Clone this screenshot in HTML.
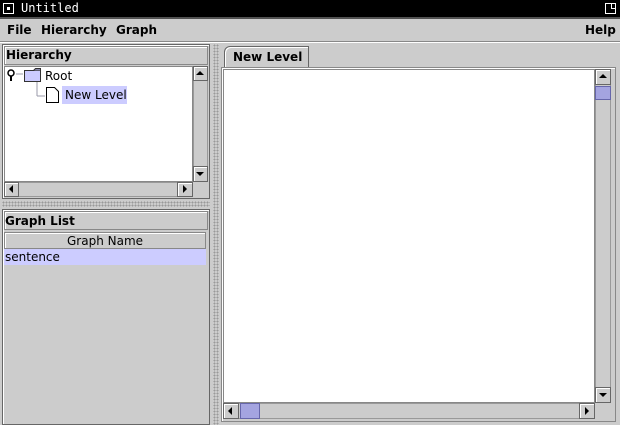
<!DOCTYPE html>
<html><head><meta charset="utf-8"><style>
*{margin:0;padding:0;box-sizing:border-box}
body{width:620px;height:425px;background:#cccccc;position:relative;overflow:hidden;font-family:"DejaVu Sans","Liberation Sans",sans-serif;font-size:12px;color:#000}
.a{position:absolute}
.t{margin-top:1px}
.b{font-weight:bold}
.dots{background-image:radial-gradient(#999 0.8px,transparent 1px);background-size:3px 3px}
.sb{background:#cccccc;border:1px solid #999}
.btn{position:absolute;background:#ccc;border:1px solid #666;box-shadow:inset 1px 1px #fff}
.thumb{position:absolute;background:#ccccff;border:1px solid #6666aa;background-image:radial-gradient(#8888cc 0.7px,transparent 1px);background-size:2px 2px}
</style></head><body>
<div class="a" style="left:0;top:0;width:620px;height:17px;background:#000"></div>
<div class="a" style="left:0;top:17px;width:620px;height:2px;background-image:radial-gradient(#000 0.7px,transparent 1px);background-size:2px 2px"></div>
<div class="a" style="left:3px;top:3px;width:11px;height:11px;border:1px solid #fff"><div class="a" style="left:3px;top:3px;width:3px;height:3px;background:#fff"></div></div>
<div class="a" style="left:21px;top:1px;color:#fff;font-family:'DejaVu Sans Mono',monospace;font-size:12px">Untitled</div>
<div class="a" style="left:605px;top:3px;width:11px;height:11px;border:1px solid #fff"><div class="a" style="left:5px;top:-1px;width:5px;height:6px;border:1px solid #fff;border-top:none;border-right:none"></div></div>
<div class="a b" style="left:7px;top:23px">File</div>
<div class="a b" style="left:41px;top:23px">Hierarchy</div>
<div class="a b" style="left:116px;top:23px">Graph</div>
<div class="a b" style="left:585px;top:23px">Help</div>
<div class="a" style="left:0;top:41px;width:620px;height:1px;background:#888"></div>
<div class="a" style="left:0;top:42px;width:620px;height:1px;background:#fff"></div>
<div class="a" style="left:2px;top:44px;width:208px;height:155px;border:1px solid #666;box-shadow:inset 1px 1px #fff"></div>
<div class="a" style="left:4px;top:46px;width:204px;height:19px;border:1px solid #888;box-shadow:inset 1px 1px #fff"></div>
<div class="a b" style="left:6px;top:48px">Hierarchy</div>
<div class="a" style="left:4px;top:66px;width:189px;height:116px;background:#fff;border:1px solid #888"></div>
<svg class="a" style="left:5px;top:67px" width="130" height="40">
<circle cx="6" cy="6" r="3" fill="#fff" stroke="#000" stroke-width="1.5"/><line x1="6" y1="9" x2="6" y2="14" stroke="#000" stroke-width="2"/>
<line x1="11" y1="7" x2="18" y2="7" stroke="#99a"/>
<path d="M19.5 3.5h16v11h-16z" fill="#ccccff" stroke="#333"/>
<path d="M28.5 3.5l2-2h5v2" fill="#8888aa" stroke="#333"/>
<line x1="32" y1="15" x2="32" y2="29" stroke="#99a"/><line x1="32" y1="29" x2="40" y2="29" stroke="#99a"/>
<path d="M41.5 20.5h8l4 4v11h-12z" fill="#fff" stroke="#000"/>
</svg>
<div class="a" style="left:45px;top:69px">Root</div>
<div class="a" style="left:62px;top:86px;width:65px;height:18px;background:#ccccff"></div>
<div class="a" style="left:65px;top:88px">New Level</div>
<div class="a sb" style="left:193px;top:66px;width:15px;height:116px"></div>
<div class="btn" style="left:193px;top:66px;width:15px;height:15px"></div>
<div class="a" style="left:196px;top:71px;border:4px solid transparent;border-bottom:4px solid #000;border-top:none"></div>
<div class="btn" style="left:193px;top:166px;width:15px;height:16px"></div>
<div class="a" style="left:196px;top:172px;border:4px solid transparent;border-top:4px solid #000;border-bottom:none"></div>
<div class="a sb" style="left:4px;top:182px;width:189px;height:15px"></div>
<div class="btn" style="left:4px;top:182px;width:15px;height:15px"></div>
<div class="a" style="left:9px;top:185px;border:4px solid transparent;border-right:4px solid #000;border-left:none"></div>
<div class="btn" style="left:177px;top:182px;width:16px;height:15px"></div>
<div class="a" style="left:183px;top:185px;border:4px solid transparent;border-left:4px solid #000;border-right:none"></div>
<div class="a dots" style="left:2px;top:201px;width:208px;height:6px"></div>
<div class="a" style="left:2px;top:209px;width:208px;height:216px;border:1px solid #666;box-shadow:inset 1px 1px #fff"></div>
<div class="a" style="left:4px;top:211px;width:204px;height:19px;border:1px solid #888;box-shadow:inset 1px 1px #fff"></div>
<div class="a b" style="left:5px;top:214px">Graph List</div>
<div class="a" style="left:4px;top:232px;width:202px;height:17px;border:1px solid #888;box-shadow:inset 1px 1px #fff"></div>
<div class="a" style="left:67px;top:234px">Graph Name</div>
<div class="a" style="left:4px;top:249px;width:202px;height:16px;background:#ccccff"></div>
<div class="a" style="left:5px;top:250px">sentence</div>
<div class="a dots" style="left:213px;top:44px;width:6px;height:381px"></div>
<div class="a" style="left:224px;top:46px;width:85px;height:23px;border:1px solid #666;border-bottom:none;border-top-left-radius:6px;box-shadow:inset 1px 1px #fff"></div>
<div class="a b" style="left:233px;top:50px">New Level</div>
<div class="a" style="left:221px;top:67px;width:395px;height:355px;border:1px solid #888;box-shadow:inset 1px 1px #fff"></div>
<div class="a" style="left:223px;top:69px;width:372px;height:334px;background:#fff;border:1px solid #888"></div>
<div class="a sb" style="left:595px;top:69px;width:16px;height:334px"></div>
<div class="btn" style="left:595px;top:69px;width:16px;height:16px"></div>
<div class="a" style="left:599px;top:74px;border:4px solid transparent;border-bottom:4px solid #000;border-top:none"></div>
<div class="thumb" style="left:595px;top:86px;width:16px;height:14px"></div>
<div class="btn" style="left:595px;top:387px;width:16px;height:16px"></div>
<div class="a" style="left:599px;top:393px;border:4px solid transparent;border-top:4px solid #000;border-bottom:none"></div>
<div class="a sb" style="left:223px;top:403px;width:372px;height:16px"></div>
<div class="btn" style="left:223px;top:403px;width:16px;height:16px"></div>
<div class="a" style="left:228px;top:407px;border:4px solid transparent;border-right:4px solid #000;border-left:none"></div>
<div class="thumb" style="left:240px;top:403px;width:20px;height:16px"></div>
<div class="btn" style="left:579px;top:403px;width:16px;height:16px"></div>
<div class="a" style="left:585px;top:407px;border:4px solid transparent;border-left:4px solid #000;border-right:none"></div>
</body></html>
